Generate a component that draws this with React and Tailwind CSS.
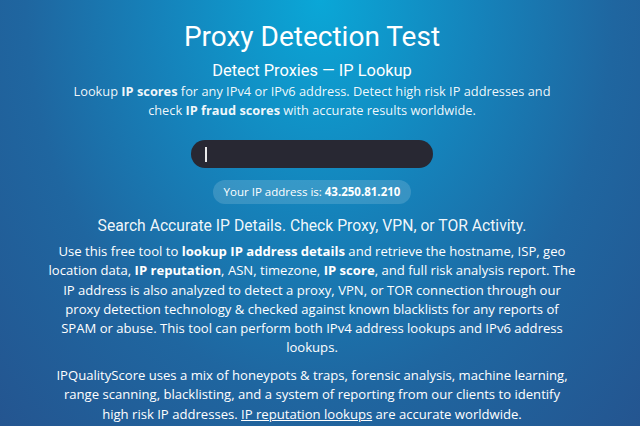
import React from "react";

const body = { fontFamily: '"Open Sans", "Noto Sans", sans-serif' };

export default function App() {
  return (
    <div className="w-[640px] h-[426px] overflow-hidden text-white bg-[radial-gradient(ellipse_at_50%_0%,#0aa7d7_0%,#1583bb_35%,#1f66a0_65%,#245590_100%)]">
      <div className="flex flex-col items-center pr-4 text-center">
        {/* Header */}
        <h1 className="mt-[19px] text-[28px] leading-[36px] font-['Roboto',sans-serif] font-normal">
          Proxy Detection Test
        </h1>
        <h2 className="mt-[6px] text-[16.4px] leading-[19px] font-['Roboto',sans-serif] font-normal">
          Detect Proxies — IP Lookup
        </h2>
        <p style={body} className="mt-[2px] text-[12.8px] leading-[19px] text-white/95">
          Lookup <b>IP scores</b> for any IPv4 or IPv6 address. Detect high risk IP addresses and
          <br />
          check <b>IP fraud scores</b> with accurate results worldwide.
        </p>

        {/* Search input */}
        <div className="mt-[20px] w-[242px] h-[28px] rounded-full bg-[#282833] flex items-center pl-[14px]">
          <span className="w-[1.5px] h-[15px] bg-white/90" />
        </div>

        {/* IP pill */}
        <div style={body} className="mt-[12px] h-[24px] px-[11px] rounded-full bg-white/15 flex items-center text-[11.5px]">
          Your IP address is:&nbsp;<b>43.250.81.210</b>
        </div>

        {/* Details */}
        <h3 className="mt-[12px] text-[15.7px] leading-[20px] font-['Roboto',sans-serif] font-normal text-white/95">
          Search Accurate IP Details. Check Proxy, VPN, or TOR Activity.
        </h3>
        <p style={body} className="mt-[6px] text-[13.1px] leading-[19.3px] whitespace-nowrap">
          Use this free tool to <b>lookup IP address details</b> and retrieve the hostname, ISP, geo
          <br />
          location data, <b>IP reputation</b>, ASN, timezone, <b>IP score</b>, and full risk analysis report. The
          <br />
          IP address is also analyzed to detect a proxy, VPN, or TOR connection through our
          <br />
          proxy detection technology &amp; checked against known blacklists for any reports of
          <br />
          SPAM or abuse. This tool can perform both IPv4 address lookups and IPv6 address
          <br />
          lookups.
        </p>
        <p style={body} className="mt-[8px] text-[13.1px] leading-[19.5px] whitespace-nowrap">
          IPQualityScore uses a mix of honeypots &amp; traps, forensic analysis, machine learning,
          <br />
          range scanning, blacklisting, and a system of reporting from our clients to identify
          <br />
          high risk IP addresses. <span className="underline">IP reputation lookups</span> are accurate worldwide.
        </p>
      </div>
    </div>
  );
}
